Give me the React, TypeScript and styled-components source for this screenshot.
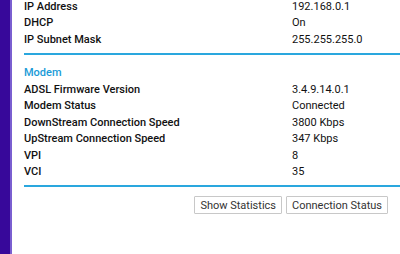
import styled, { createGlobalStyle } from 'styled-components';

const GlobalStyle = createGlobalStyle`
  html, body {
    margin: 0;
    padding: 0;
    background: #fff;
    font-family: Roboto, "Liberation Sans", sans-serif;
    overflow: hidden;
  }
`;

const Page = styled.div`
  display: flex;
  width: 400px;
  height: 254px;
`;

const Sidebar = styled.div`
  width: 10px;
  flex: none;
  background: #37089a;
  border-right: 2px solid #7a5fd0;
`;

const Content = styled.div`
  flex: 1;
  padding-left: 12px;
  margin-top: -2px;
`;

const Section = styled.div`
  border-bottom: 2px solid #2aa7de;
  padding-bottom: 5px;
`;

const Row = styled.div`
  display: grid;
  grid-template-columns: 268px 1fr;
  height: 16.5px;
  align-items: center;
  font-size: 11px;
  color: #111;
`;

const Label = styled.span`
  font-weight: 500;
`;

const Value = styled.span`
  font-weight: 400;
`;

const Heading = styled.div`
  color: #1a9bd7;
  font-weight: 500;
  font-size: 11px;
  height: 16.5px;
  line-height: 16.5px;
  margin-top: 10px;
`;

const Actions = styled.div`
  display: flex;
  justify-content: flex-end;
  gap: 4px;
  padding: 9px 12px 0 0;
`;

const Button = styled.button`
  font-family: Roboto, "Liberation Sans", sans-serif;
  font-size: 11px;
  color: #333;
  background: #fff;
  border: 1px solid #c8c8c8;
  border-radius: 1px;
  height: 18px;
  padding: 0 5px;
`;

const network = [
  ['IP Address', '192.168.0.1'],
  ['DHCP', 'On'],
  ['IP Subnet Mask', '255.255.255.0'],
];

const modem = [
  ['ADSL Firmware Version', '3.4.9.14.0.1'],
  ['Modem Status', 'Connected'],
  ['DownStream Connection Speed', '3800 Kbps'],
  ['UpStream Connection Speed', '347 Kbps'],
  ['VPI', '8'],
  ['VCI', '35'],
];

export default function App() {
  return (
    <Page>
      <GlobalStyle />
      <Sidebar />
      <Content>
        <Section>
          {network.map(([k, v]) => (
            <Row key={k}>
              <Label>{k}</Label>
              <Value>{v}</Value>
            </Row>
          ))}
        </Section>
        <Section>
          <Heading>Modem</Heading>
          {modem.map(([k, v]) => (
            <Row key={k}>
              <Label>{k}</Label>
              <Value>{v}</Value>
            </Row>
          ))}
        </Section>
        <Actions>
          <Button>Show Statistics</Button>
          <Button>Connection Status</Button>
        </Actions>
      </Content>
    </Page>
  );
}
